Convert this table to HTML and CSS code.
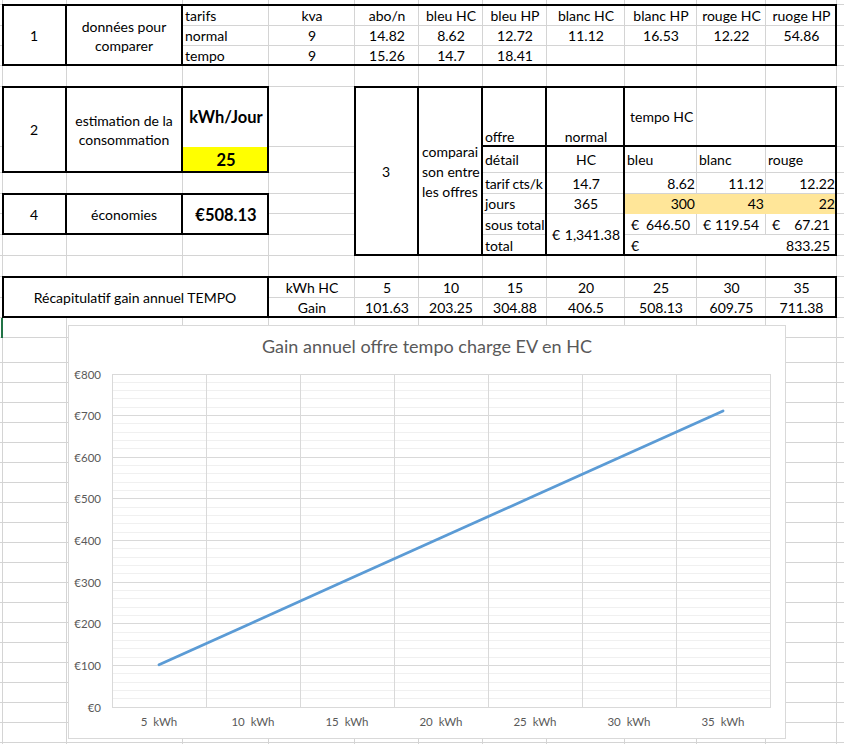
FILE: index.html
```html
<!DOCTYPE html>
<html lang="fr">
<head>
<meta charset="utf-8">
<title>Comparaison offres tempo</title>
<link rel="stylesheet" href="styles.css">
</head>
<body>
<div class="sheet">
  <div class="vlines"><i></i><i></i><i></i><i></i><i></i><i></i><i></i><i></i><i></i><i></i><i></i><i></i><i></i></div>
  <div class="hlines"><i></i><i></i><i></i><i></i><i></i><i></i><i></i><i></i><i></i><i></i><i></i><i></i><i></i><i></i><i></i><i></i><i></i><i></i><i></i><i></i><i></i><i></i><i></i><i></i><i></i><i></i><i></i><i></i><i></i><i></i><i></i><i></i><i></i><i></i><i></i><i></i></div>

  <div class="cells">
    <!-- block 1 -->
    <div class="cell m ctr mid br xA y1 h3">1</div>
    <div class="cell m ctr mid br wrap xB y1 h3">données pour comparer</div>
    <div class="cell xC y1">tarifs</div>
    <div class="cell ctr xD y1">kva</div>
    <div class="cell ctr xE y1">abo/n</div>
    <div class="cell ctr xF y1">bleu HC</div>
    <div class="cell ctr xG y1">bleu HP</div>
    <div class="cell ctr xH y1">blanc HC</div>
    <div class="cell ctr xI y1">blanc HP</div>
    <div class="cell ctr xJ y1">rouge HC</div>
    <div class="cell ctr xK y1">ruoge HP</div>

    <div class="cell xC y2">normal</div>
    <div class="cell ctr xD y2">9</div>
    <div class="cell ctr xE y2">14.82</div>
    <div class="cell ctr xF y2">8.62</div>
    <div class="cell ctr xG y2">12.72</div>
    <div class="cell ctr xH y2">11.12</div>
    <div class="cell ctr xI y2">16.53</div>
    <div class="cell ctr xJ y2">12.22</div>
    <div class="cell ctr xK y2">54.86</div>

    <div class="cell xC y3">tempo</div>
    <div class="cell ctr xD y3">9</div>
    <div class="cell ctr xE y3">15.26</div>
    <div class="cell ctr xF y3">14.7</div>
    <div class="cell ctr xG y3">18.41</div>

    <!-- block 2 -->
    <div class="cell m ctr mid br xA y5 h2">2</div>
    <div class="cell m ctr mid br wrap xB y5 h2">estimation de la consommation</div>
    <div class="cell m ctr mid big xC y5">kWh/Jour</div>
    <div class="cell ctr mid big yellow xC y6">25</div>

    <!-- block 4 -->
    <div class="cell m ctr mid br xA y8 h2">4</div>
    <div class="cell m ctr mid br xB y8 h2">économies</div>
    <div class="cell m ctr mid big xC y8 h2">€508.13</div>

    <!-- block 3 -->
    <div class="cell m ctr mid br xE y5 h6">3</div>
    <div class="cell m stack br xF y5 h6"><span>comparai</span><span>son entre</span><span>les offres</span></div>
    <div class="cell xG y5">offre</div>
    <div class="cell ctr xH y5">normal</div>
    <div class="cell mid indent xI y5">tempo HC</div>

    <div class="cell up xG y6">détail</div>
    <div class="cell up ctr xH y6">HC</div>
    <div class="cell up xI y6">bleu</div>
    <div class="cell up xJ y6">blanc</div>
    <div class="cell up xK y6">rouge</div>

    <div class="cell tight xG y7">tarif cts/k</div>
    <div class="cell ctr xH y7">14.7</div>
    <div class="cell rt xI y7">8.62</div>
    <div class="cell rt xJ y7">11.12</div>
    <div class="cell rt xK y7">12.22</div>

    <div class="cell xG y8">jours</div>
    <div class="cell ctr xH y8">365</div>
    <div class="cell rt gold xI y8">300</div>
    <div class="cell rt gold xJ y8">43</div>
    <div class="cell rt gold xK y8">22</div>

    <div class="cell xG y9">sous total</div>
    <div class="cell m mid acct wide xH y9 h2"><span>€</span><span>1,341.38</span></div>
    <div class="cell acct xI y9"><span>€</span><span>646.50</span></div>
    <div class="cell acct xJ y9"><span>€</span><span>119.54</span></div>
    <div class="cell acct xK y9"><span>€</span><span>67.21</span></div>

    <div class="cell xG y10">total</div>
    <div class="cell m acct xI y10 w3"><span>€</span><span>833.25</span></div>

    <!-- block 5 -->
    <div class="cell m ctr mid br xA y12 w3 h2">Récapitulatif gain annuel TEMPO</div>
    <div class="cell ctr xD y12">kWh HC</div>
    <div class="cell ctr xE y12">5</div>
    <div class="cell ctr xF y12">10</div>
    <div class="cell ctr xG y12">15</div>
    <div class="cell ctr xH y12">20</div>
    <div class="cell ctr xI y12">25</div>
    <div class="cell ctr xJ y12">30</div>
    <div class="cell ctr xK y12">35</div>

    <div class="cell ctr xD y13">Gain</div>
    <div class="cell ctr xE y13">101.63</div>
    <div class="cell ctr xF y13">203.25</div>
    <div class="cell ctr xG y13">304.88</div>
    <div class="cell ctr xH y13">406.5</div>
    <div class="cell ctr xI y13">508.13</div>
    <div class="cell ctr xJ y13">609.75</div>
    <div class="cell ctr xK y13">711.38</div>

    <!-- selection marker -->
    <div class="sel x0 y14"></div>

    <!-- thick borders -->
    <div class="ln-r xG y5 h6"></div>
    <div class="ln-r xH y5 h6"></div>
    <div class="ln-b xG y5 w5"></div>
    <div class="frame xA y1 w11 h3"></div>
    <div class="frame xA y5 w3 h2"></div>
    <div class="frame xA y8 w3 h2"></div>
    <div class="frame xE y5 w7 h6"></div>
    <div class="frame xA y12 w11 h2"></div>
  </div>

  <div class="chart">
    <svg viewBox="1 1 716 412" width="716" height="412">
      <text class="title" x="359" y="28">Gain annuel offre tempo charge EV en HC</text>
      <path class="minor" d="M44 373.5H702M44 365.5H702M44 357.5H702M44 348.5H702M44 332.5H702M44 323.5H702M44 315.5H702M44 307.5H702M44 290.5H702M44 282.5H702M44 273.5H702M44 265.5H702M44 248.5H702M44 240.5H702M44 232.5H702M44 223.5H702M44 207.5H702M44 198.5H702M44 190.5H702M44 182.5H702M44 165.5H702M44 157.5H702M44 148.5H702M44 140.5H702M44 123.5H702M44 115.5H702M44 107.5H702M44 98.5H702M44 82.5H702M44 73.5H702M44 65.5H702M44 57.5H702"/>
      <path class="major" d="M44 382.5H703M44 340.5H703M44 298.5H703M44 257.5H703M44 215.5H703M44 173.5H703M44 132.5H703M44 90.5H703M44 49.5H703M44.5 49V383M138.5 49V383M232.5 49V383M326.5 49V383M420.5 49V383M514.5 49V383M608.5 49V383M702.5 49V383"/>
      <text class="ylab" x="33" y="386.5">€0</text>
      <text class="ylab" x="33" y="344.5">€100</text>
      <text class="ylab" x="33" y="302.5">€200</text>
      <text class="ylab" x="33" y="261.5">€300</text>
      <text class="ylab" x="33" y="219.5">€400</text>
      <text class="ylab" x="33" y="177.5">€500</text>
      <text class="ylab" x="33" y="136.5">€600</text>
      <text class="ylab" x="33" y="94.5">€700</text>
      <text class="ylab" x="33" y="53.5">€800</text>
      <text class="xlab" x="91" y="401">5 &#160;kWh</text>
      <text class="xlab" x="185" y="401">10 &#160;kWh</text>
      <text class="xlab" x="279" y="401">15 &#160;kWh</text>
      <text class="xlab" x="373" y="401">20 &#160;kWh</text>
      <text class="xlab" x="467" y="401">25 &#160;kWh</text>
      <text class="xlab" x="561" y="401">30 &#160;kWh</text>
      <text class="xlab" x="655" y="401">35 &#160;kWh</text>
      <polyline class="series" points="91,339.7 185,297.4 279,255.1 373,212.8 467,170.5 561,128.2 655,85.9"/>
    </svg>
  </div>
</div>
</body>
</html>
```

FILE: styles.css
```css
:root {
  --cols: 3px 64px 116px 86px 86px 64px 64px 64px 78px 72px 69px 71px 8px;
  --rows: 5px 21px 20px 20px 21px 60px 26px 21px 20px 21px 21px 21px 21px 20px 20px 25px repeat(20, 20px);
  --gridline: #d4d4d4;
}

* { box-sizing: border-box; }

html, body {
  margin: 0;
  padding: 0;
  background: #fff;
}

body {
  width: 844px;
  height: 744px;
  overflow: hidden;
  font-family: Lato, "Noto Sans", sans-serif;
  font-size: 14px;
  color: #000;
}

.sheet {
  position: relative;
  display: grid;
  width: 844px;
  height: 744px;
  overflow: hidden;
}

.vlines, .hlines, .cells { grid-area: 1 / 1; }

.vlines {
  display: grid;
  grid-template-columns: var(--cols);
  grid-template-rows: 1fr;
}
.vlines i { border-right: 1px solid var(--gridline); }

.hlines {
  display: grid;
  grid-template-rows: var(--rows);
}
.hlines i { border-bottom: 1px solid var(--gridline); }

.cells {
  display: grid;
  grid-template-columns: var(--cols);
  grid-template-rows: var(--rows);
}

/* placement */
.x0 { grid-column-start: 1; }
.xA { grid-column-start: 2; }
.xB { grid-column-start: 3; }
.xC { grid-column-start: 4; }
.xD { grid-column-start: 5; }
.xE { grid-column-start: 6; }
.xF { grid-column-start: 7; }
.xG { grid-column-start: 8; }
.xH { grid-column-start: 9; }
.xI { grid-column-start: 10; }
.xJ { grid-column-start: 11; }
.xK { grid-column-start: 12; }

.y1 { grid-row-start: 2; }
.y2 { grid-row-start: 3; }
.y3 { grid-row-start: 4; }
.y5 { grid-row-start: 6; }
.y6 { grid-row-start: 7; }
.y7 { grid-row-start: 8; }
.y8 { grid-row-start: 9; }
.y9 { grid-row-start: 10; }
.y10 { grid-row-start: 11; }
.y12 { grid-row-start: 13; }
.y13 { grid-row-start: 14; }
.y14 { grid-row-start: 15; }

.w3 { grid-column-end: span 3; }
.w5 { grid-column-end: span 5; }
.w7 { grid-column-end: span 7; }
.w11 { grid-column-end: span 11; }
.h2 { grid-row-end: span 2; }
.h3 { grid-row-end: span 3; }
.h6 { grid-row-end: span 6; }

/* cells */
.cell {
  display: flex;
  align-items: flex-end;
  justify-content: flex-start;
  padding: 0 2px 1px;
  line-height: 18px;
  white-space: nowrap;
  min-width: 0;
}
.ctr { justify-content: center; text-align: center; }
.rt { justify-content: flex-end; }
.mid { align-items: center; padding-bottom: 0; }
.up { padding-bottom: 4px; }
.wrap { white-space: normal; line-height: 19px; }
.m { background: #fff; }
.br { border-right: 2px solid #000; }
.big { font-weight: 700; font-size: 16.5px; }
.yellow { background: #ffff00; }
.gold { background: #ffe699; }
.tight { padding-left: 2px; padding-right: 0; letter-spacing: -0.2px; }
.indent { padding-left: 5px; }
.acct { justify-content: space-between; padding-left: 6px; padding-right: 7px; }
.acct.wide { padding-left: 5px; padding-right: 5px; }
.stack {
  flex-direction: column;
  justify-content: center;
  align-items: flex-start;
  line-height: 20px;
  padding: 0 0 0 3px;
}

.sel { border-right: 2px solid #217346; }

.frame {
  border: 2px solid #000;
  margin: -1px 0 0 -1px;
}
.ln-r { border-right: 2px solid #000; }
.ln-b { border-bottom: 2px solid #000; }

/* chart */
.chart {
  position: absolute;
  left: 68px;
  top: 325px;
  width: 718px;
  height: 414px;
  background: #fff;
  border: 1px solid #d9d9d9;
}
.chart svg { display: block; }
.chart text {
  font-family: Lato, "Noto Sans", sans-serif;
  fill: #595959;
}
.chart .title { font-size: 18px; text-anchor: middle; }
.chart .ylab { font-size: 11.5px; text-anchor: end; }
.chart .xlab { font-size: 11.5px; text-anchor: middle; }
.minor { stroke: #f0f0f0; stroke-width: 1; fill: none; }
.major { stroke: #d9d9d9; stroke-width: 1; fill: none; }
.series {
  fill: none;
  stroke: #5b9bd5;
  stroke-width: 2.75;
  stroke-linejoin: round;
  stroke-linecap: round;
}
```
